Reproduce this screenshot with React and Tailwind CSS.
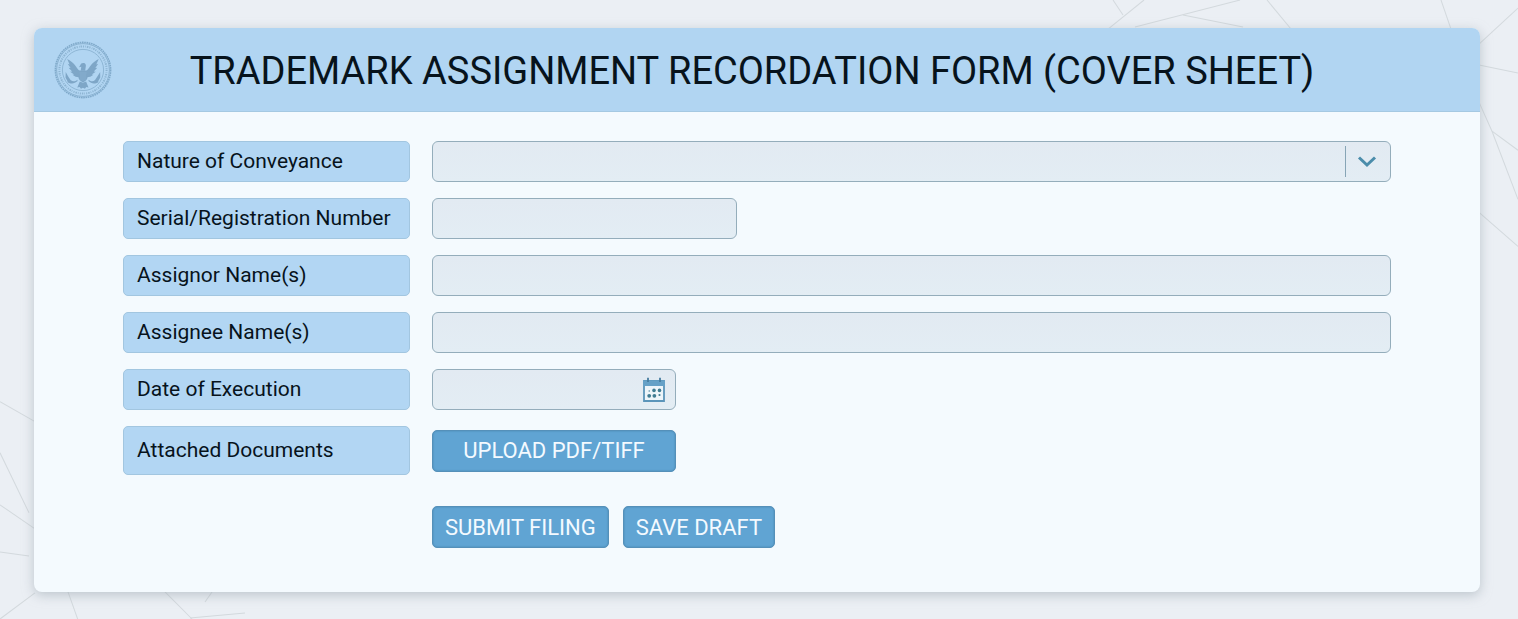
import { useState } from 'react'

const BG_LINES = [
  [1144, 0, 1108, 29], [1113, 0, 1123, 15], [1240, 0, 1135, 27], [1183, 15, 1243, 27],
  [1267, 0, 1291, 29], [1441, 0, 1451, 29], [1518, 8, 1479, 44], [1479, 65, 1518, 73],
  [1479, 102, 1492, 131], [1492, 131, 1518, 150], [1492, 131, 1518, 199], [1479, 212, 1518, 246],
  [0, 401, 35, 421], [0, 452, 29, 512], [0, 504, 35, 528], [0, 551, 29, 555],
  [35, 592, 0, 618], [68, 591, 78, 619], [165, 591, 192, 618], [212, 591, 205, 601], [190, 617, 245, 612],
]

const FIELD = `h-[41px] w-full rounded-md border border-[#94adbb] bg-linear-to-b from-[#e2eaf2] to-[#e3edf4]
  px-3 text-[21px] text-[#0b1a26] outline-none focus:border-[#5a9fcc]`
const BUTTON = `h-[42px] rounded-[5px] border border-[#5590b9] bg-[#60a4d3] text-[22px] text-[#f4faff]
  shadow-[inset_0_0_2px_#4681aa] cursor-pointer hover:bg-[#5599c9]`

function Backdrop() {
  return (
    <svg className="absolute inset-0 h-full w-full" viewBox="0 0 1518 619" preserveAspectRatio="none" aria-hidden="true">
      {BG_LINES.map(([x1, y1, x2, y2], i) => (
        <line key={i} x1={x1} y1={y1} x2={x2} y2={y2} stroke="#d3d9dd" strokeWidth="1" />
      ))}
    </svg>
  )
}

function Seal() {
  return (
    <svg className="size-[58px] shrink-0" viewBox="0 0 58 58" fill="none" aria-hidden="true">
      <circle cx="29" cy="29" r="27.6" stroke="#7fa9ca" strokeWidth="1.6" strokeDasharray="1.6 .7" />
      <circle cx="29" cy="29" r="26.4" stroke="#87afce" strokeWidth=".9" />
      {/* lettering band */}
      <circle cx="29" cy="29" r="23.600" stroke="#8db4d2" strokeWidth="2" strokeDasharray="1.1 1.3 .7 .9 1.5 1" />
      <circle cx="29" cy="29" r="20.6" stroke="#8ab2d1" strokeWidth=".9" />
      <g fill="#7ea6c7" transform="translate(-1.5 2.800) scale(1.05)">
        {/* wings */}
        <path d="M14 14.5c3 1.600 5.500 3.500 7.300 5.800 1.500 1.900 2.500 3.800 4 5.200l1.700 1.200-.8 5.300-4.200-.6-3-2 1.600-.2-3.800-2.700 1.900-.1-3.400-3.500 1.900.2-2.700-4 1.800.6z" />
        <path d="M44 14.500c-3 1.600-5.500 3.500-7.300 5.800-1.500 1.900-2.500 3.800-4 5.200L31 26.700l.8 5.300 4.200-.6 3-2-1.600-.2 3.800-2.700-1.900-.1 3.400-3.500-1.900.2 2.700-4-1.800.6z" />
        {/* head and shield */}
        <path d="M26.300 20.600c.6-1.800 2-2.600 3.600-2.200 1.300.3 1.900 1.300 1.900 2.600l-.7 4.600h-4.200l.5-3.700-2.200.5z" />
        <path d="M24.700 25.400h8.700v5.800c0 2.600-1.500 4.300-4.300 5.700-2.900-1.400-4.400-3.100-4.400-5.700z" />
        {/* tail */}
        <path d="m26 36 3 1.200 3-1.200 2.300 5.700-2.200-.5-1.200 1.600-1.900-1-1.900 1-1.200-1.600-2.300.5z" />
        {/* branch and arrows */}
        <path d="M23.700 34.200c-2.500 2-4.600 1.900-6.500.2l-2.100-3.100-2.500-4.400-.2 5.300 2 3.700-.3.400c3.400 2.400 6.800 2 9.800-.8zM34.500 34.200c2.500 2 4.300 1.700 6 .2l2.200-3.200 2.700-4.400.1 5.300-2.100 3.800.5.400c-3.400 2.400-6.800 2-9.700-.8z" />
      </g>
      <path d="M25.500 32h7M27 33v6.200M29 33v7M31 33v6.200" stroke="#8fb7d7" strokeWidth=".6" />
    </svg>
  )
}

function CalendarIcon() {
  return (
    <svg className="h-[26px] w-6" viewBox="0 0 24 26" fill="none" aria-hidden="true">
      <path d="M2 4h20v20H2z" fill="#edf5fa" stroke="#5b95ba" strokeWidth="1.8" />
      <path d="M1 3.500h22V9H1z" fill="#66a1c7" />
      <path d="M6 .8v4.200M18 .8v4.200" stroke="#477d9f" strokeWidth="1.800" />
      <g fill="#3f7c92">
        <circle cx="12" cy="13.400" r="1.800" />
        <circle cx="17.500" cy="13.400" r="1.800" />
        <circle cx="7.200" cy="18.800" r="1.900" />
        <circle cx="12.400" cy="18.800" r="1.900" />
        <circle cx="17.500" cy="18" r="1.100" />
        <circle cx="7.200" cy="14" r=".7" />
      </g>
    </svg>
  )
}

function Row({ id, label, children, tall }) {
  return (
    <div className="grid grid-cols-[287px_1fr] items-center gap-[22px]">
      <label htmlFor={id}
        className={`flex items-center rounded-[5px] border border-[#a2c6e0] bg-[#b2d6f3] px-[13px]
                    text-[21px] whitespace-nowrap text-[#07131c] ${tall ? 'h-[49px]' : 'h-[41px]'}`}>
        {label}
      </label>
      <div>{children}</div>
    </div>
  )
}

export default function App() {
  const [nature, setNature] = useState('')

  return (
    <div className="relative min-h-screen bg-[#ebeff4] pt-7 pr-[38px] pb-7 pl-[34px] font-['Roboto',sans-serif]">
      <Backdrop />
      <main className="relative overflow-hidden rounded-lg bg-[#f4fafe] shadow-[0_3px_12px_#98a4ae90]">
        <header className="flex h-[84px] items-center border-b border-[#a5c9e2] bg-[#b1d5f2] pr-[88px] pl-5">
          <Seal />
          <h1 className="flex-1 pt-1 text-center text-[38px] whitespace-nowrap text-[#07131c]">
            TRADEMARK ASSIGNMENT RECORDATION FORM (COVER SHEET)
          </h1>
        </header>

        <form className="px-[89px] pt-[29px] pb-11" onSubmit={e => e.preventDefault()}>
          <div className="flex flex-col gap-4">
            <Row id="nature" label="Nature of Conveyance">
              <div className="relative">
                <select id="nature" value={nature} onChange={e => setNature(e.target.value)}
                  className={`${FIELD} block appearance-none`}>
                  <option value=""></option>
                </select>
                <div className="pointer-events-none absolute inset-y-0 right-0 flex w-[46px] items-center pr-1">
                  <span className="h-[31px] w-px bg-[#87a5b6]" />
                  <svg className="mx-auto h-3 w-5" viewBox="0 0 20 12" fill="none" aria-hidden="true">
                    <path d="m2 1.500 8 7.500 8-7.500" stroke="#4b8dab" strokeWidth="3" />
                  </svg>
                </div>
              </div>
            </Row>
            <Row id="serial" label="Serial/Registration Number">
              <div className="max-w-[305px]"><input id="serial" type="text" className={`${FIELD} block`} /></div>
            </Row>
            <Row id="assignor" label="Assignor Name(s)">
              <input id="assignor" type="text" className={`${FIELD} block`} />
            </Row>
            <Row id="assignee" label="Assignee Name(s)">
              <input id="assignee" type="text" className={`${FIELD} block`} />
            </Row>
            <Row id="executed" label="Date of Execution">
              <div className="relative max-w-[244px]">
                <input id="executed" type="text" className={`${FIELD} block`} />
                <button type="button" aria-label="Open calendar"
                  className="absolute inset-y-0 right-[10px] flex cursor-pointer items-center">
                  <CalendarIcon />
                </button>
              </div>
            </Row>
            <Row id="upload" label="Attached Documents" tall>
              <button id="upload" type="button" className={`${BUTTON} block w-[244px]`}>UPLOAD PDF/TIFF</button>
            </Row>
          </div>

          <div className="mt-[31px] flex gap-[14px] pl-[309px]">
            <button type="submit" className={`${BUTTON} px-3`}>SUBMIT FILING</button>
            <button type="button" className={`${BUTTON} px-3`}>SAVE DRAFT</button>
          </div>
        </form>
      </main>
    </div>
  )
}
